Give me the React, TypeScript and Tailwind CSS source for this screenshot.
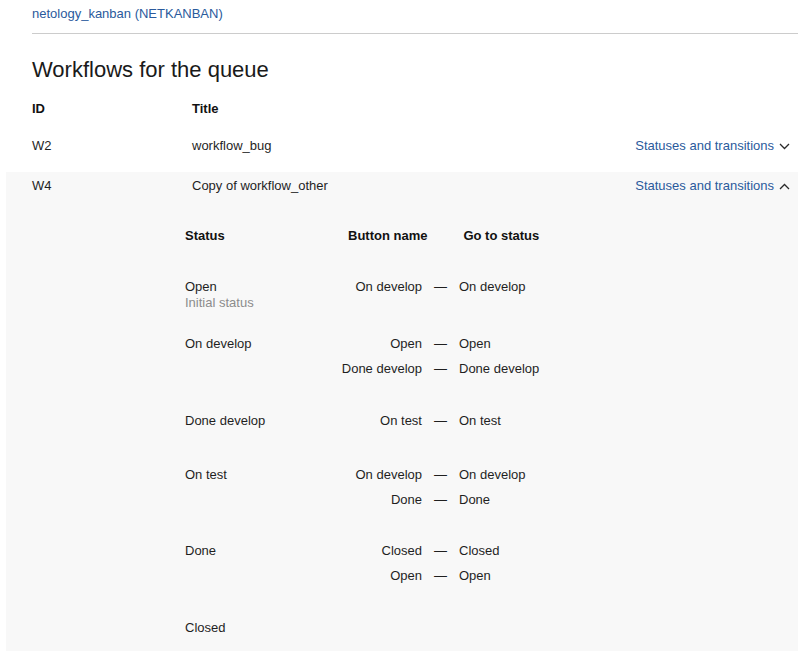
import React from "react";

type Group = {
  status: string;
  initial?: boolean;
  h: string;
  transitions: [string, string][];
};

const groups: Group[] = [
  { status: "Open", initial: true, h: "h-[57px]", transitions: [["On develop", "On develop"]] },
  {
    status: "On develop",
    h: "h-[77px]",
    transitions: [
      ["Open", "Open"],
      ["Done develop", "Done develop"],
    ],
  },
  { status: "Done develop", h: "h-[54px]", transitions: [["On test", "On test"]] },
  {
    status: "On test",
    h: "h-[76px]",
    transitions: [
      ["On develop", "On develop"],
      ["Done", "Done"],
    ],
  },
  {
    status: "Done",
    h: "h-[77px]",
    transitions: [
      ["Closed", "Closed"],
      ["Open", "Open"],
    ],
  },
  { status: "Closed", h: "h-[32px]", transitions: [] },
];

function Chevron({ up }: { up?: boolean }) {
  return (
    <svg width="11" height="7" viewBox="0 0 11 7" className="ml-[5px] shrink-0">
      <path
        d={up ? "M1 6 L5.5 1.5 L10 6" : "M1 1 L5.5 5.5 L10 1"}
        fill="none"
        stroke="#2a2a2a"
        strokeWidth="1.3"
      />
    </svg>
  );
}

function LinkCell({ up }: { up?: boolean }) {
  return (
    <div className="ml-auto flex items-center text-[#2a5a9c]">
      <span>Statuses and transitions</span>
      <Chevron up={up} />
    </div>
  );
}

export default function App() {
  return (
    <div
      className="min-h-[652px] bg-white pl-[32px] text-[13px] leading-[16px] text-[#1f1f1f]"
      style={{ fontFamily: '"Liberation Sans", Arial, sans-serif' }}
    >
      <div className="pt-[6px] text-[#2a5a9c]">netology_kanban (NETKANBAN)</div>
      <div className="mt-[11px] border-t border-[#cccccc]" />
      <h1 className="mt-[23px] text-[22px] leading-[26px] font-normal text-[#1a1a1a]">
        Workflows for the queue
      </h1>

      <div className="mt-[18px] flex pb-[15px] font-bold text-[#111]">
        <div className="w-[160px]">ID</div>
        <div>Title</div>
      </div>

      <div className="flex items-center pt-[6px] pb-[18px] pr-[8px]">
        <div className="w-[160px]">W2</div>
        <div>workflow_bug</div>
        <LinkCell />
      </div>

      <div className="-ml-[26px] bg-[#f8f8f8] pl-[26px] pr-[8px] pt-[6px]">
        <div className="flex items-center">
          <div className="w-[160px]">W4</div>
          <div>Copy of workflow_other</div>
          <LinkCell up />
        </div>

        <div className="ml-[153px] mt-[34px]">
          <div className="flex font-bold text-[#111]">
            <div className="w-[163px]">Status</div>
            <div>Button name</div>
            <div className="ml-[36px]">Go to status</div>
          </div>

          <div className="mt-[34px] leading-[17px]">
            {groups.map((g) => (
              <div key={g.status} className={`flex ${g.h}`}>
                <div className="w-[147px]">
                  <div>{g.status}</div>
                  {g.initial && (
                    <div className="leading-[15px] text-[#8c8c8c]">Initial status</div>
                  )}
                </div>
                <div className="flex flex-col gap-[8px]">
                  {g.transitions.map(([btn, to], i) => (
                    <div key={i} className="flex">
                      <div className="w-[90px] text-right">{btn}</div>
                      <div className="w-[37px] text-center">—</div>
                      <div>{to}</div>
                    </div>
                  ))}
                </div>
              </div>
            ))}
          </div>
        </div>
      </div>
    </div>
  );
}
